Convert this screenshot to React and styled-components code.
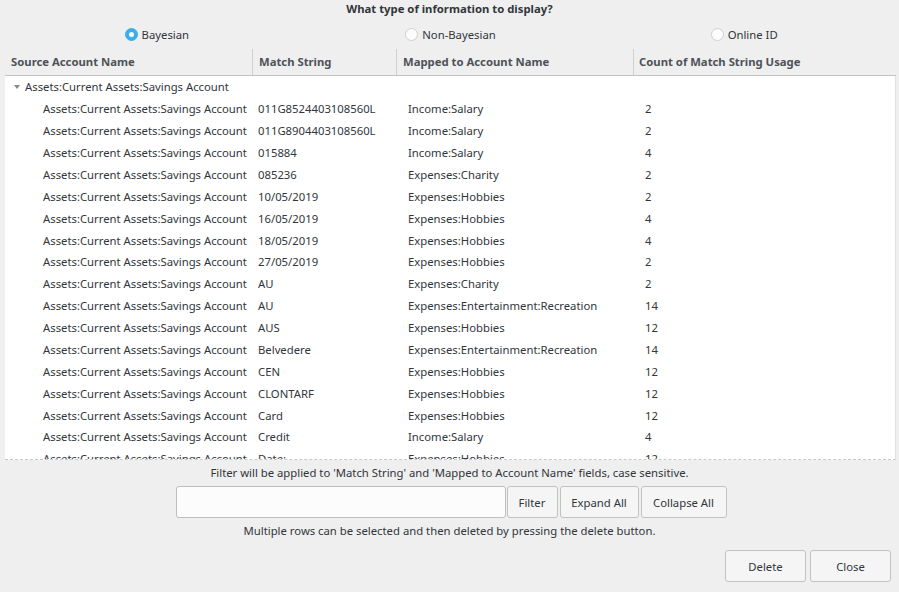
import React from 'react';
import styled, { createGlobalStyle } from 'styled-components';

const GlobalStyle = createGlobalStyle`
  html, body {
    margin: 0;
    padding: 0;
    background: #efefef;
  }
  body {
    font-family: "Noto Sans", "DejaVu Sans", sans-serif;
    font-size: 11.3px;
    color: #31363b;
  }
`;

const Window = styled.div`
  width: 899px;
  height: 592px;
  background: #efefef;
  display: flex;
  flex-direction: column;
  overflow: hidden;
`;

const Title = styled.div`
  height: 18px;
  line-height: 18px;
  text-align: center;
  font-weight: bold;
  margin-bottom: 6px;
`;

const RadioRow = styled.div`
  display: grid;
  grid-template-columns: repeat(3, 1fr);
  height: 20px;
  align-items: center;
`;

const RadioOption = styled.label`
  display: flex;
  align-items: center;
  justify-content: center;
  gap: 4px;
  transform: translateX(${({ $shift }) => $shift}px);
`;

const RadioDot = styled.span`
  width: 13px;
  height: 13px;
  border-radius: 50%;
  box-sizing: border-box;
  display: inline-flex;
  align-items: center;
  justify-content: center;
  background: ${({ $checked }) => ($checked ? '#3daee9' : '#fcfcfc')};
  border: 1px solid ${({ $checked }) => ($checked ? '#3daee9' : '#cfd0d1')};

  &::after {
    content: '';
    width: 5px;
    height: 5px;
    border-radius: 50%;
    background: ${({ $checked }) => ($checked ? '#fcfcfc' : 'transparent')};
  }
`;

const Table = styled.div`
  margin: 0 3px 0 5px;
  display: flex;
  flex-direction: column;
`;

const cols = '247px 144px 237px 1fr';

const HeaderRow = styled.div`
  display: grid;
  grid-template-columns: ${cols};
  height: 32px;
  box-sizing: border-box;
  padding-top: 5px;
  border-bottom: 1px solid #c2c3c4;
  background: #efefef;
`;

const HeaderCell = styled.div`
  display: flex;
  align-items: center;
  padding-left: ${({ $pad }) => $pad}px;
  font-weight: bold;
  color: #4d5257;
  border-left: ${({ $first }) => ($first ? 'none' : '1px solid #cfd0d1')};
  padding-bottom: 1px;
`;

const Body = styled.div`
  height: 384px;
  background: #ffffff;
  overflow: hidden;
  border-right: 1px solid #e2e2e2;
  border-bottom: 1px dashed #c8c8c8;
  box-sizing: border-box;
`;

const Row = styled.div`
  display: grid;
  grid-template-columns: ${cols};
  height: 21.875px;
  align-items: center;
  white-space: nowrap;
`;

const Cell = styled.div`
  padding-left: ${({ $pad }) => $pad}px;
  overflow: hidden;
`;

const ParentCell = styled.div`
  grid-column: 1 / span 4;
  display: flex;
  align-items: center;
  padding-left: 9px;
  gap: 5px;
`;

const Arrow = styled.span`
  width: 0;
  height: 0;
  border-left: 3.5px solid transparent;
  border-right: 3.5px solid transparent;
  border-top: 4px solid #7f8c8d;
`;

const Note = styled.div`
  height: 26px;
  line-height: 26px;
  text-align: center;
`;

const FilterRow = styled.div`
  display: flex;
  justify-content: center;
  gap: 2px;
  height: 32px;
  padding-left: 3px;
`;

const Input = styled.div`
  width: 330px;
  height: 32px;
  box-sizing: border-box;
  background: #fcfcfc;
  border: 1px solid #bcbebf;
  border-radius: 3px;
  margin-right: -1px;
`;

const Button = styled.button`
  font-family: inherit;
  font-size: 11.3px;
  color: #31363b;
  height: 32px;
  width: ${({ $w }) => $w}px;
  box-sizing: border-box;
  background: #f5f5f5;
  border: 1px solid #c0c2c3;
  border-radius: 3px;
  padding: 0;
`;

const Footer = styled.div`
  display: flex;
  justify-content: flex-end;
  gap: 4px;
  margin-top: 6px;
  padding-right: 8px;
`;

const rows = [
  ['011G8524403108560L', 'Income:Salary', '2'],
  ['011G8904403108560L', 'Income:Salary', '2'],
  ['015884', 'Income:Salary', '4'],
  ['085236', 'Expenses:Charity', '2'],
  ['10/05/2019', 'Expenses:Hobbies', '2'],
  ['16/05/2019', 'Expenses:Hobbies', '4'],
  ['18/05/2019', 'Expenses:Hobbies', '4'],
  ['27/05/2019', 'Expenses:Hobbies', '2'],
  ['AU', 'Expenses:Charity', '2'],
  ['AU', 'Expenses:Entertainment:Recreation', '14'],
  ['AUS', 'Expenses:Hobbies', '12'],
  ['Belvedere', 'Expenses:Entertainment:Recreation', '14'],
  ['CEN', 'Expenses:Hobbies', '12'],
  ['CLONTARF', 'Expenses:Hobbies', '12'],
  ['Card', 'Expenses:Hobbies', '12'],
  ['Credit', 'Income:Salary', '4'],
  ['Date:', 'Expenses:Hobbies', '12'],
];

const SOURCE = 'Assets:Current Assets:Savings Account';

export default function App() {
  return (
    <Window>
      <GlobalStyle />
      <Title>What type of information to display?</Title>
      <RadioRow>
        <RadioOption $shift={7}>
          <RadioDot $checked />
          Bayesian
        </RadioOption>
        <RadioOption $shift={1}>
          <RadioDot />
          Non-Bayesian
        </RadioOption>
        <RadioOption $shift={-5}>
          <RadioDot />
          Online ID
        </RadioOption>
      </RadioRow>
      <Table>
        <HeaderRow>
          <HeaderCell $first $pad={6}>Source Account Name</HeaderCell>
          <HeaderCell $pad={6}>Match String</HeaderCell>
          <HeaderCell $pad={6}>Mapped to Account Name</HeaderCell>
          <HeaderCell $pad={5}>Count of Match String Usage</HeaderCell>
        </HeaderRow>
        <Body>
          <Row>
            <ParentCell>
              <Arrow />
              {SOURCE}
            </ParentCell>
          </Row>
          {rows.map((r, i) => (
            <Row key={i}>
              <Cell $pad={38}>{SOURCE}</Cell>
              <Cell $pad={6}>{r[0]}</Cell>
              <Cell $pad={12}>{r[1]}</Cell>
              <Cell $pad={12}>{r[2]}</Cell>
            </Row>
          ))}
        </Body>
      </Table>
      <Note>Filter will be applied to 'Match String' and 'Mapped to Account Name' fields, case sensitive.</Note>
      <FilterRow>
        <Input />
        <Button $w={51}>Filter</Button>
        <Button $w={79}>Expand All</Button>
        <Button $w={86}>Collapse All</Button>
      </FilterRow>
      <Note>Multiple rows can be selected and then deleted by pressing the delete button.</Note>
      <Footer>
        <Button $w={81}>Delete</Button>
        <Button $w={81}>Close</Button>
      </Footer>
    </Window>
  );
}
